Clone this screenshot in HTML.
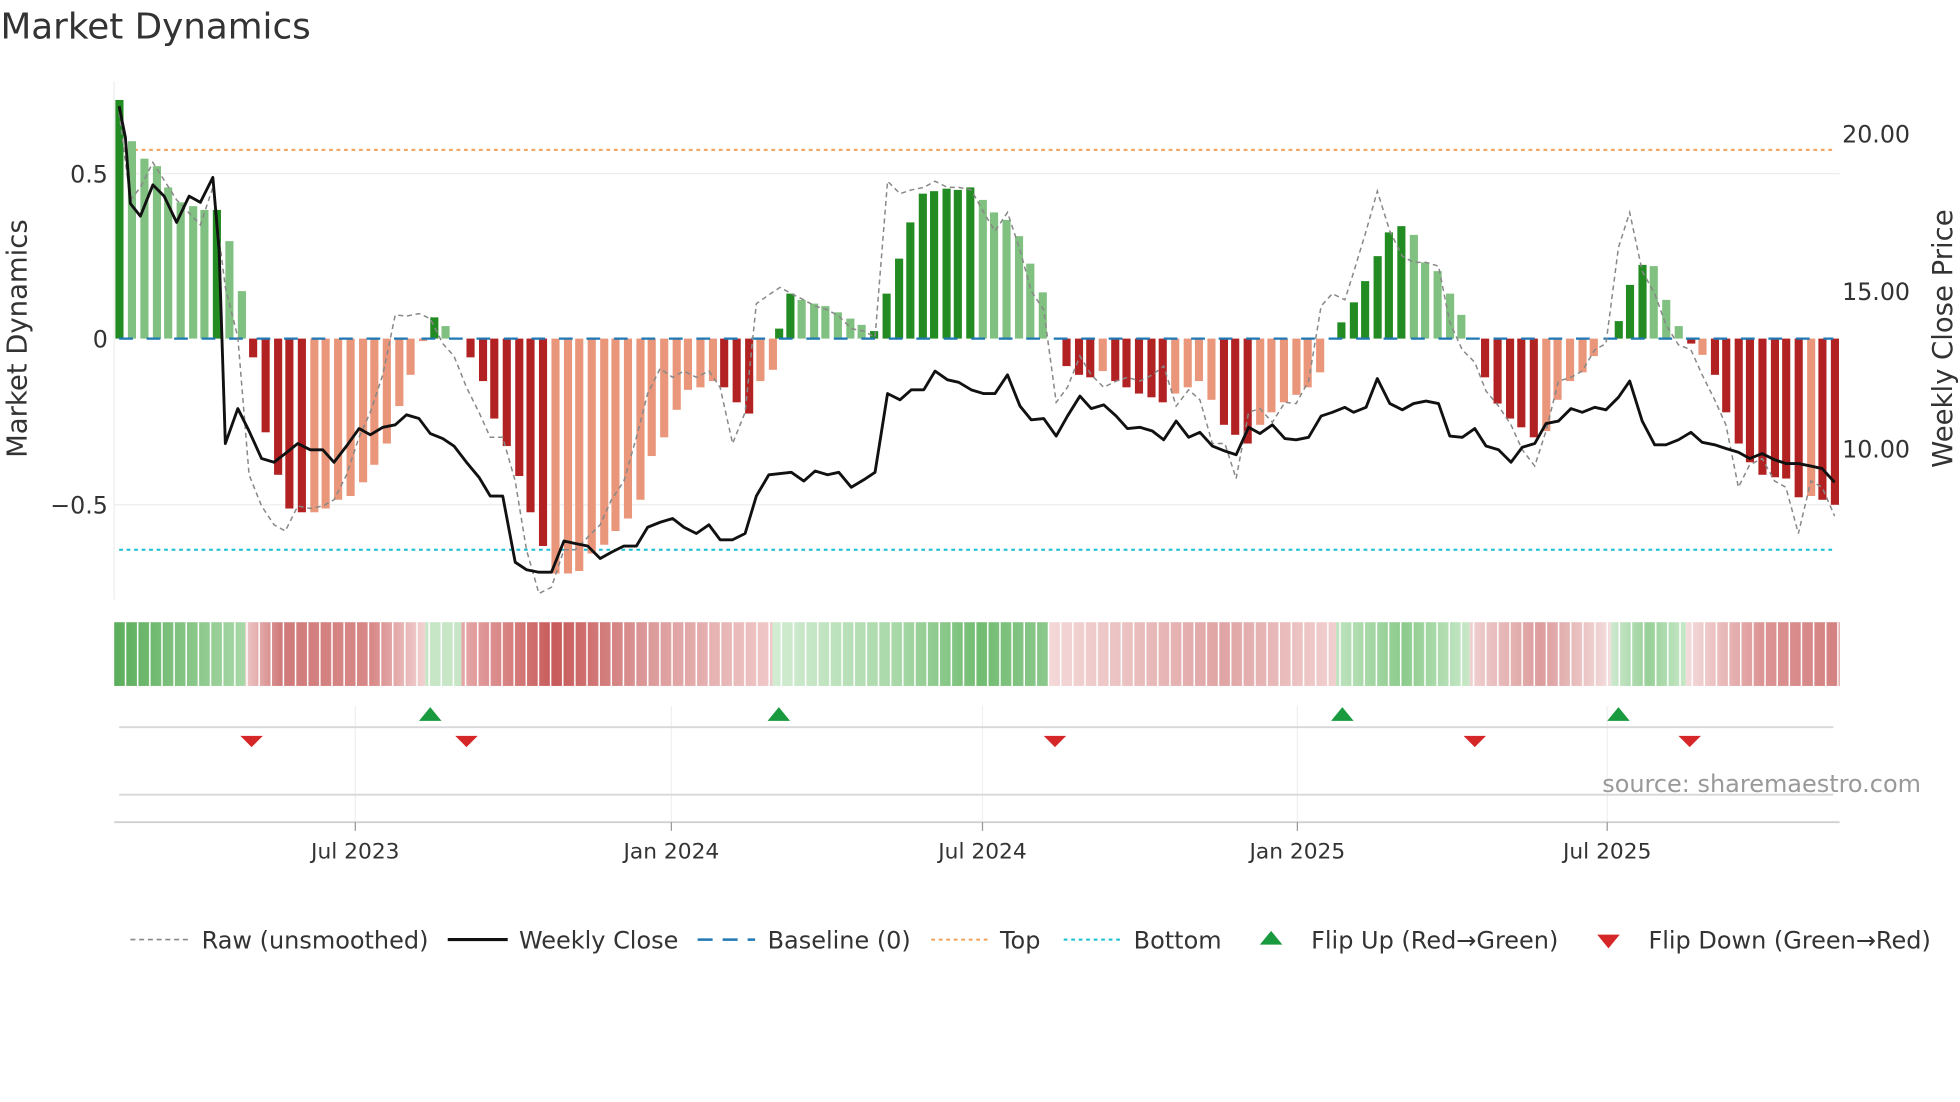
<!DOCTYPE html>
<html><head><meta charset="utf-8"><style>
html,body{margin:0;padding:0;background:#fff;width:1960px;height:1102px;overflow:hidden}
svg{display:block}
text{font-family:"DejaVu Sans","Liberation Sans",sans-serif;fill:#333}
</style></head><body>
<svg width="1960" height="1102" viewBox="0 0 1568 882" xmlns="http://www.w3.org/2000/svg">
<defs>
<pattern id="sep" patternUnits="userSpaceOnUse" x="91" y="0" width="9.72" height="10"><rect x="8.5" y="0" width="1.3" height="10" fill="#fff"/></pattern>
<linearGradient id="h1" x1="0" x2="1"><stop offset="0" stop-color="#5aad5a"/><stop offset="1" stop-color="#a8d8a8"/></linearGradient>
<linearGradient id="h2" x1="0" x2="1"><stop offset="0" stop-color="#eec8c8"/><stop offset=".2" stop-color="#d07a7a"/><stop offset=".7" stop-color="#d88888"/><stop offset="1" stop-color="#f2d2d2"/></linearGradient>
<linearGradient id="h3" x1="0" x2="1"><stop offset="0" stop-color="#e6a8a8"/><stop offset=".3" stop-color="#c85a5a"/><stop offset=".6" stop-color="#dc9a9a"/><stop offset="1" stop-color="#f0c8c8"/></linearGradient>
<linearGradient id="h4" x1="0" x2="1"><stop offset="0" stop-color="#d2ecd2"/><stop offset=".45" stop-color="#a8d8a8"/><stop offset=".75" stop-color="#72bc72"/><stop offset="1" stop-color="#8cc88c"/></linearGradient>
<linearGradient id="h5" x1="0" x2="1"><stop offset="0" stop-color="#f4d8d8"/><stop offset=".6" stop-color="#e0a4a4"/><stop offset="1" stop-color="#f2d0d0"/></linearGradient>
<linearGradient id="h6" x1="0" x2="1"><stop offset="0" stop-color="#bfe3bf"/><stop offset=".5" stop-color="#8ccb8c"/><stop offset="1" stop-color="#c8e8c8"/></linearGradient>
<linearGradient id="h7" x1="0" x2="1"><stop offset="0" stop-color="#f0d0d0"/><stop offset=".5" stop-color="#dc9c9c"/><stop offset="1" stop-color="#f4dede"/></linearGradient>
<linearGradient id="h8" x1="0" x2="1"><stop offset="0" stop-color="#cfe9cf"/><stop offset=".5" stop-color="#98d098"/><stop offset="1" stop-color="#c8e8c8"/></linearGradient>
<linearGradient id="h9" x1="0" x2="1"><stop offset="0" stop-color="#f4dcdc"/><stop offset=".5" stop-color="#dc9494"/><stop offset="1" stop-color="#d48080"/></linearGradient>
</defs>
<text x="0" y="31" style="font-size:28.6px">Market Dynamics</text>

<line x1="91" y1="65" x2="91" y2="480" stroke="#eee"/>
<line x1="91" y1="139" x2="1472" y2="139" stroke="#eee"/>
<line x1="91" y1="404" x2="1472" y2="404" stroke="#eee"/>
<text x="86" y="146" text-anchor="end" style="font-size:19px">0.5</text>
<text x="86" y="278" text-anchor="end" style="font-size:19px">0</text>
<text x="86" y="411" text-anchor="end" style="font-size:19px">−0.5</text>
<text x="1474" y="114" style="font-size:19px">20.00</text>
<text x="1474" y="240" style="font-size:19px">15.00</text>
<text x="1474" y="366" style="font-size:19px">10.00</text>
<text transform="translate(21,271) rotate(-90)" text-anchor="middle" style="font-size:22px">Market Dynamics</text>
<text transform="translate(1562,271) rotate(-90)" text-anchor="middle" style="font-size:22px">Weekly Close Price</text>

<line x1="95" y1="120" x2="1467" y2="120" stroke="#f0a058" stroke-width="1.6" stroke-dasharray="3,3"/>
<line x1="95" y1="440" x2="1467" y2="440" stroke="#17becf" stroke-width="1.6" stroke-dasharray="3,3"/>

<g>
<g fill="#228b22"><rect x="92" y="80" width="6.5" height="191"/><rect x="170" y="168" width="6.5" height="103"/><rect x="344" y="254" width="6.5" height="17"/>
<rect x="620" y="263" width="6.5" height="8"/><rect x="629" y="235" width="6.5" height="36"/><rect x="696" y="265" width="6.5" height="6"/><rect x="706" y="235" width="6.5" height="36"/><rect x="716" y="207" width="6.5" height="64"/><rect x="725" y="178" width="6.5" height="93"/><rect x="735" y="155" width="6.5" height="116"/><rect x="744" y="153" width="6.5" height="118"/><rect x="754" y="151" width="6.5" height="120"/><rect x="763" y="152" width="6.5" height="119"/><rect x="773" y="150" width="6.5" height="121"/>
<rect x="1070" y="258" width="6.5" height="13"/><rect x="1080" y="242" width="6.5" height="29"/><rect x="1089" y="225" width="6.5" height="46"/><rect x="1099" y="205" width="6.5" height="66"/><rect x="1108" y="186" width="6.5" height="85"/><rect x="1118" y="181" width="6.5" height="90"/>
<rect x="1292" y="257" width="6.5" height="14"/><rect x="1301" y="228" width="6.5" height="43"/><rect x="1311" y="212" width="6.5" height="59"/></g>
<g fill="#80c080"><rect x="102" y="113" width="6.5" height="158"/><rect x="112" y="127" width="6.5" height="144"/><rect x="122" y="133" width="6.5" height="138"/><rect x="131" y="150" width="6.5" height="121"/><rect x="141" y="162" width="6.5" height="109"/><rect x="151" y="165" width="6.5" height="106"/><rect x="160" y="168" width="6.5" height="103"/><rect x="180" y="193" width="6.5" height="78"/><rect x="190" y="233" width="6.5" height="38"/><rect x="353" y="261" width="6.5" height="10"/>
<rect x="638" y="240" width="6.5" height="31"/><rect x="648" y="243" width="6.5" height="28"/><rect x="657" y="245" width="6.5" height="26"/><rect x="667" y="250" width="6.5" height="21"/><rect x="677" y="255" width="6.5" height="16"/><rect x="686" y="260" width="6.5" height="11"/>
<rect x="783" y="160" width="6.5" height="111"/><rect x="792" y="170" width="6.5" height="101"/><rect x="802" y="176" width="6.5" height="95"/><rect x="812" y="189" width="6.5" height="82"/><rect x="821" y="211" width="6.5" height="60"/><rect x="831" y="234" width="6.5" height="37"/>
<rect x="1128" y="188" width="6.5" height="83"/><rect x="1137" y="210" width="6.5" height="61"/><rect x="1147" y="217" width="6.5" height="54"/><rect x="1157" y="235" width="6.5" height="36"/><rect x="1166" y="252" width="6.5" height="19"/>
<rect x="1320" y="213" width="6.5" height="58"/><rect x="1330" y="240" width="6.5" height="31"/><rect x="1340" y="261" width="6.5" height="10"/></g>
<g fill="#b22222"><rect x="199" y="271" width="6.5" height="15"/><rect x="209" y="271" width="6.5" height="75"/><rect x="219" y="271" width="6.5" height="109"/><rect x="228" y="271" width="6.5" height="136"/><rect x="238" y="271" width="6.5" height="139"/>
<rect x="373" y="271" width="6.5" height="15"/><rect x="383" y="271" width="6.5" height="34"/><rect x="392" y="271" width="6.5" height="64"/><rect x="402" y="271" width="6.5" height="86"/><rect x="412" y="271" width="6.5" height="110"/><rect x="421" y="271" width="6.5" height="139"/><rect x="431" y="271" width="6.5" height="166"/>
<rect x="576" y="271" width="6.5" height="39"/><rect x="586" y="271" width="6.5" height="51"/><rect x="596" y="271" width="6.5" height="60"/>
<rect x="850" y="271" width="6.5" height="22"/><rect x="860" y="271" width="6.5" height="29"/><rect x="869" y="271" width="6.5" height="31"/><rect x="889" y="271" width="6.5" height="34"/><rect x="898" y="271" width="6.5" height="39"/><rect x="908" y="271" width="6.5" height="44"/><rect x="918" y="271" width="6.5" height="47"/><rect x="927" y="271" width="6.5" height="51"/><rect x="976" y="271" width="6.5" height="69"/><rect x="985" y="271" width="6.5" height="77"/><rect x="995" y="271" width="6.5" height="84"/>
<rect x="1185" y="271" width="6.5" height="31"/><rect x="1195" y="271" width="6.5" height="52"/><rect x="1205" y="271" width="6.5" height="64"/><rect x="1214" y="271" width="6.5" height="71"/><rect x="1224" y="271" width="6.5" height="79"/>
<rect x="1350" y="271" width="6.5" height="4"/><rect x="1369" y="271" width="6.5" height="29"/><rect x="1378" y="271" width="6.5" height="59"/><rect x="1388" y="271" width="6.5" height="84"/><rect x="1397" y="271" width="6.5" height="99"/><rect x="1407" y="271" width="6.5" height="109"/><rect x="1417" y="271" width="6.5" height="111"/><rect x="1426" y="271" width="6.5" height="112"/><rect x="1436" y="271" width="6.5" height="127"/><rect x="1455" y="271" width="6.5" height="129"/><rect x="1465" y="271" width="6.5" height="133"/></g>
<g fill="#e9967a"><rect x="248" y="271" width="6.5" height="139"/><rect x="257" y="271" width="6.5" height="136"/><rect x="267" y="271" width="6.5" height="129"/><rect x="277" y="271" width="6.5" height="126"/><rect x="287" y="271" width="6.5" height="115"/><rect x="296" y="271" width="6.5" height="101"/><rect x="306" y="271" width="6.5" height="84"/><rect x="316" y="271" width="6.5" height="54"/><rect x="325" y="271" width="6.5" height="29"/><rect x="335" y="271" width="6.5" height="2"/>
<rect x="441" y="271" width="6.5" height="188"/><rect x="451" y="271" width="6.5" height="188"/><rect x="460" y="271" width="6.5" height="186"/><rect x="470" y="271" width="6.5" height="172"/><rect x="480" y="271" width="6.5" height="165"/><rect x="489" y="271" width="6.5" height="154"/><rect x="499" y="271" width="6.5" height="144"/><rect x="509" y="271" width="6.5" height="129"/><rect x="518" y="271" width="6.5" height="94"/><rect x="528" y="271" width="6.5" height="79"/><rect x="538" y="271" width="6.5" height="57"/><rect x="547" y="271" width="6.5" height="41"/><rect x="557" y="271" width="6.5" height="39"/><rect x="567" y="271" width="6.5" height="34"/><rect x="605" y="271" width="6.5" height="34"/><rect x="615" y="271" width="6.5" height="25"/>
<rect x="879" y="271" width="6.5" height="26"/><rect x="937" y="271" width="6.5" height="44"/><rect x="947" y="271" width="6.5" height="39"/><rect x="956" y="271" width="6.5" height="34"/><rect x="966" y="271" width="6.5" height="49"/><rect x="1005" y="271" width="6.5" height="69"/><rect x="1014" y="271" width="6.5" height="59"/><rect x="1024" y="271" width="6.5" height="51"/><rect x="1034" y="271" width="6.5" height="45"/><rect x="1043" y="271" width="6.5" height="39"/><rect x="1053" y="271" width="6.5" height="27"/>
<rect x="1234" y="271" width="6.5" height="74"/><rect x="1243" y="271" width="6.5" height="49"/><rect x="1253" y="271" width="6.5" height="34"/><rect x="1263" y="271" width="6.5" height="27"/><rect x="1272" y="271" width="6.5" height="14"/><rect x="1359" y="271" width="6.5" height="13"/><rect x="1446" y="271" width="6.5" height="126"/></g>
</g>

<line x1="95" y1="271" x2="1467" y2="271" stroke="#1f77b4" stroke-width="1.8" stroke-dasharray="11,11"/>

<polyline fill="none" stroke="#888" stroke-width="1.2" stroke-dasharray="4,3" points="95,90 104,160 112,150 122,130 141,160 160,180 170,150 180,230 190,270 199,380 209,405 219,420 228,425 238,405 248,407 258,405 267,400 277,380 287,350 296,330 306,300 316,252 325,253 335,251 344,255 354,275 363,285 373,310 383,330 392,350 402,350 412,385 421,440 431,475 441,470 451,440 460,440 470,430 480,420 489,400 499,385 509,350 518,315 528,295 538,302 547,297 557,302 567,297 576,310 586,355 596,330 605,243 615,236 624,230 633,235 643,240 652,245 662,248 671,253 681,263 691,265 700,270 710,145 720,155 729,152 739,150 748,145 758,150 767,150 777,152 787,170 796,185 806,170 816,200 825,233 835,248 845,322 854,310 864,285 873,300 883,310 893,305 902,302 912,305 922,300 931,293 941,325 951,312 960,320 970,355 980,355 989,383 999,330 1008,327 1018,338 1028,322 1037,323 1047,305 1057,245 1066,235 1076,240 1083,218 1093,185 1102,153 1112,185 1122,205 1131,210 1141,210 1151,213 1160,258 1170,280 1180,290 1189,313 1199,325 1209,340 1218,360 1228,373 1237,345 1247,305 1257,302 1266,297 1276,280 1285,275 1295,198 1304,170 1314,217 1324,235 1333,260 1343,276 1353,280 1362,300 1372,320 1381,340 1391,390 1400,372 1410,367 1420,385 1429,390 1439,427 1449,385 1458,390 1468,413"/>
<polyline fill="none" stroke="#111" stroke-width="2.3" stroke-linejoin="round" points="95,85 100,110 104,163 112,173 122,148 131,157 141,178 151,157 160,162 170,142 175,200 180,355 190,327 199,345 209,367 219,370 228,363 238,355 248,360 258,360 267,370 277,357 287,343 296,348 306,342 316,340 325,332 335,335 344,347 354,351 363,357 373,370 383,382 392,397 402,397 412,450 421,456 431,458 441,458 451,433 460,435 470,437 480,447 489,442 499,437 509,437 518,422 528,418 538,415 547,422 557,427 567,420 576,432 586,432 596,427 605,397 615,380 624,379 633,378 643,385 652,377 662,380 671,378 681,390 691,384 700,378 710,315 720,320 729,312 739,312 748,297 758,304 767,306 777,312 787,315 796,315 806,300 816,325 825,336 835,335 845,349 854,333 864,317 873,327 883,324 893,333 902,343 912,342 922,345 931,352 941,337 951,350 960,346 970,357 980,361 989,364 999,342 1008,347 1018,340 1028,351 1037,352 1047,350 1057,333 1066,330 1076,326 1083,330 1093,326 1102,303 1112,323 1122,328 1131,323 1141,321 1151,323 1160,349 1170,350 1180,343 1189,357 1199,360 1209,370 1218,358 1228,355 1237,339 1247,337 1257,327 1266,330 1276,326 1285,328 1295,318 1304,305 1314,337 1324,356 1333,356 1343,352 1353,346 1362,354 1372,356 1381,359 1391,362 1400,367 1410,363 1420,368 1429,371 1439,371 1449,373 1458,375 1468,386"/>

<g>
<rect x="91" y="498" width="105" height="51" fill="url(#h1)"/>
<rect x="196" y="498" width="144" height="51" fill="url(#h2)"/>
<rect x="340" y="498" width="29" height="51" fill="#c6e6c6"/>
<rect x="369" y="498" width="249" height="51" fill="url(#h3)"/>
<rect x="618" y="498" width="221" height="51" fill="url(#h4)"/>
<rect x="839" y="498" width="230" height="51" fill="url(#h5)"/>
<rect x="1069" y="498" width="107" height="51" fill="url(#h6)"/>
<rect x="1176" y="498" width="113" height="51" fill="url(#h7)"/>
<rect x="1289" y="498" width="60" height="51" fill="url(#h8)"/>
<rect x="1349" y="498" width="123" height="51" fill="url(#h9)"/>
<rect x="91" y="498" width="1381" height="51" fill="url(#sep)"/>
</g>

<g stroke="#f0f0f0"><line x1="284" y1="565" x2="284" y2="658"/><line x1="537" y1="565" x2="537" y2="658"/><line x1="786" y1="565" x2="786" y2="658"/><line x1="1038" y1="565" x2="1038" y2="658"/><line x1="1286" y1="565" x2="1286" y2="658"/></g>
<line x1="95" y1="582" x2="1467" y2="582" stroke="#d8d8d8" stroke-width="1.5"/>
<line x1="95" y1="636" x2="1467" y2="636" stroke="#d8d8d8" stroke-width="1.5"/>
<line x1="91" y1="658" x2="1472" y2="658" stroke="#d0d0d0" stroke-width="1.5"/>
<g stroke="#999"><line x1="284" y1="658" x2="284" y2="665"/><line x1="537" y1="658" x2="537" y2="665"/><line x1="786" y1="658" x2="786" y2="665"/><line x1="1038" y1="658" x2="1038" y2="665"/><line x1="1286" y1="658" x2="1286" y2="665"/></g>
<g fill="#1a9a3e"><polygon points="344,566 335,577 353,577"/><polygon points="623,566 614,577 632,577"/><polygon points="1074,566 1065,577 1083,577"/><polygon points="1295,566 1286,577 1304,577"/></g>
<g fill="#d62728"><polygon points="192,589 210,589 201,598"/><polygon points="364,589 382,589 373,598"/><polygon points="835,589 853,589 844,598"/><polygon points="1171,589 1189,589 1180,598"/><polygon points="1343,589 1361,589 1352,598"/></g>
<text x="1282" y="634" style="font-size:19.2px;fill:#999">source: sharemaestro.com</text>
<g style="font-size:17.4px" text-anchor="middle"><text x="284" y="687">Jul 2023</text><text x="537" y="687">Jan 2024</text><text x="786" y="687">Jul 2024</text><text x="1038" y="687">Jan 2025</text><text x="1286" y="687">Jul 2025</text></g>

<g style="font-size:19.2px">
<line x1="104" y1="752" x2="150" y2="752" stroke="#888" stroke-width="1.3" stroke-dasharray="4,3"/>
<text x="161" y="759">Raw (unsmoothed)</text>
<line x1="358" y1="752" x2="406" y2="752" stroke="#111" stroke-width="2.5"/>
<text x="415" y="759">Weekly Close</text>
<line x1="558" y1="752" x2="604" y2="752" stroke="#1f77b4" stroke-width="2" stroke-dasharray="12,8"/>
<text x="614" y="759">Baseline (0)</text>
<line x1="745" y1="752" x2="790" y2="752" stroke="#f0a058" stroke-width="1.6" stroke-dasharray="3,3"/>
<text x="800" y="759">Top</text>
<line x1="851" y1="752" x2="896" y2="752" stroke="#17becf" stroke-width="1.6" stroke-dasharray="3,3"/>
<text x="907" y="759">Bottom</text>
<polygon points="1017,745 1008,756 1026,756" fill="#1a9a3e"/>
<text x="1049" y="759">Flip Up (Red→Green)</text>
<polygon points="1278,748 1296,748 1287,759" fill="#d62728"/>
<text x="1319" y="759">Flip Down (Green→Red)</text>
</g>
</svg>
</body></html>
